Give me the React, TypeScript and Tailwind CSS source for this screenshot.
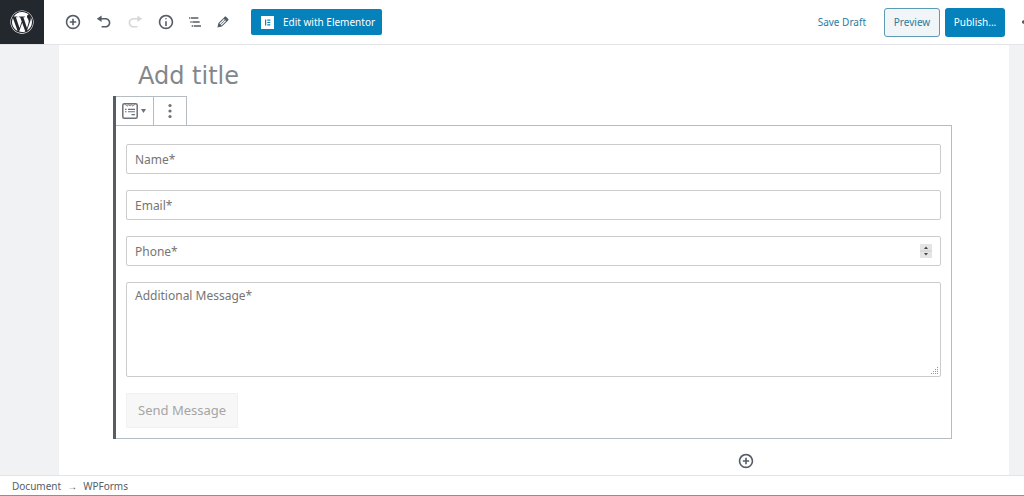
import React from 'react';
import { FaWordpress } from 'react-icons/fa';

interface IconProps {
  d: string;
  viewBox?: string;
  className?: string;
}

const paths = {
  insert:
    'M10 1c-5 0-9 4-9 9s4 9 9 9 9-4 9-9-4-9-9-9zm0 16c-3.9 0-7-3.1-7-7s3.1-7 7-7 7 3.1 7 7-3.1 7-7 7zm1-11H9v3H6v2h3v3h2v-3h3V9h-3V6z',
  undo: 'M12 5H7V2L1 6l6 4V7h5c2.2 0 4 1.8 4 4s-1.8 4-4 4H7v2h5c3.3 0 6-2.7 6-6s-2.7-6-6-6z',
  redo: 'M8 5h5V2l6 4-6 4V7H8c-2.2 0-4 1.8-4 4s1.8 4 4 4h5v2H8c-3.3 0-6-2.7-6-6s2.7-6 6-6z',
  info: 'M9 15h2V9H9v6zm1-10c-.5 0-1 .5-1 1s.5 1 1 1 1-.5 1-1-.5-1-1-1zm0-4c-5 0-9 4-9 9s4 9 9 9 9-4 9-9-4-9-9-9zm0 16c-3.9 0-7-3.1-7-7s3.1-7 7-7 7 3.1 7 7-3.1 7-7 7z',
  outline:
    'M5 5H3v2h2V5zm3 8h11v-2H8v2zm9-8H6v2h11V5zM7 11H5v2h2v-2zm0 8h2v-2H7v2zm3-2v2h11v-2H10z',
  edit: 'M13.89 3.39l2.71 2.72c.46.46.42 1.24.03 1.64l-8.01 8.02-5.56 1.16 1.16-5.58s7.6-7.63 7.99-8.03c.39-.39 1.22-.39 1.68.07zm-2.73 2.79l-5.59 5.61 1.11 1.11 5.54-5.65zm-2.97 8.23l5.58-5.6-1.07-1.08-5.59 5.6z',
};

const Icon: React.FC<IconProps> = ({
  d,
  viewBox = '0 0 20 20',
  className = 'w-4 h-4',
}: IconProps) => (
  <svg viewBox={viewBox} className={className} fill="currentColor" aria-hidden="true">
    <path d={d} />
  </svg>
);

const tools = [
  { label: 'Add block', d: paths.insert, className: 'w-[31px] text-[#555d66]' },
  { label: 'Undo', d: paths.undo, className: 'w-[31px] text-[#555d66]' },
  { label: 'Redo', d: paths.redo, className: 'w-[31px] text-[#d5d7d9]', disabled: true },
  { label: 'Content structure', d: paths.info, className: 'w-[31px] text-[#555d66]' },
  {
    label: 'Block navigation',
    d: paths.outline,
    viewBox: '0 0 24 24',
    className: 'w-7 text-[#555d66]',
  },
  { label: 'Modes', d: paths.edit, className: 'w-7 text-[#555d66]' },
];

const Header = () => (
  <header className="flex items-stretch h-[45px] bg-white border-b border-[#e2e4e7] overflow-hidden">
    <a
      href="#dashboard"
      aria-label="View Posts"
      className="w-11 shrink-0 flex items-center justify-center bg-[#23282e] text-white"
    >
      <FaWordpress className="w-6 h-6" />
    </a>
    <div className="flex items-center pl-[13px]">
      {tools.map((tool) => (
        <button
          key={tool.label}
          type="button"
          aria-label={tool.label}
          disabled={tool.disabled}
          className={`h-8 flex items-center justify-center ${tool.className}`}
        >
          <Icon d={tool.d} viewBox={tool.viewBox} />
        </button>
      ))}
      <button
        type="button"
        className="ml-[14px] h-[26px] w-[131px] pl-[10px] flex items-center gap-[9px] rounded-[2px] bg-[#0581bc] text-white text-[10px] whitespace-nowrap"
      >
        <svg viewBox="0 0 13 13" className="w-[13px] h-[13px]" aria-hidden="true">
          <rect width="13" height="13" fill="#fff" />
          <path d="M4 3.5h1.2v6H4zM6.3 3.5H9.3v1.2H6.3zM6.3 5.9H9.3v1.2H6.3zM6.3 8.3H9.3v1.2H6.3z" fill="#0581bc" />
        </svg>
        Edit with Elementor
      </button>
    </div>
    <div className="ml-auto flex items-center text-[10px] whitespace-nowrap">
      <button type="button" className="mr-[18px] text-[#2b7ba0]">
        Save Draft
      </button>
      <button
        type="button"
        className="h-[29px] w-14 mr-[5px] rounded-[3px] border border-[#5d9bb5] bg-[#f1f5f7] text-[#2b7ba0]"
      >
        Preview
      </button>
      <button type="button" className="h-[29px] w-[60px] rounded-[3px] bg-[#0581bc] text-white">
        Publish...
      </button>
      <button type="button" aria-label="Settings" className="w-[19px] flex justify-end text-[#555d66]">
        <svg viewBox="0 0 2 4" className="w-[2px] h-1" fill="currentColor" aria-hidden="true">
          <path d="M2 0v4L0 3V1z" />
        </svg>
      </button>
    </div>
  </header>
);

const BlockToolbar = () => (
  <div className="flex self-start h-[30px] -mb-px border border-[#b5bcc2] border-l-0 bg-white text-[#6c7279]">
    <button
      type="button"
      aria-label="Change block type"
      className="w-[38px] pr-[2px] flex items-center justify-center gap-[3px] border-r border-[#b5bcc2]"
    >
      <svg viewBox="0 0 16 16" className="w-4 h-4" fill="none" stroke="currentColor" aria-hidden="true">
        <rect x=".8" y=".8" width="14.4" height="14.4" rx="1.5" strokeWidth="1.5" />
        <path d="M3 1.2l2 2 1.7-1.4L8 2.8l1.3-1L11 3.2l2-2" strokeWidth=".9" />
        <path d="M3 6.4h1.5M6 6.4h7M3 8.8h1.5M6 8.8h7M9.5 11.6H13" strokeWidth="1.1" />
      </svg>
      <svg viewBox="0 0 5 4" className="w-[5px] h-1" fill="currentColor" aria-hidden="true">
        <path d="M0 0h5L2.5 4z" />
      </svg>
    </button>
    <button type="button" aria-label="More options" className="w-8 flex items-center justify-center">
      <svg viewBox="0 0 4 16" className="w-1 h-4" fill="currentColor" aria-hidden="true">
        <circle cx="2" cy="2.5" r="1.6" />
        <circle cx="2" cy="8" r="1.6" />
        <circle cx="2" cy="13.5" r="1.6" />
      </svg>
    </button>
  </div>
);

const fieldClass =
  'block w-full border border-[#ccc] rounded-[2px] bg-white px-2 text-[12px] text-[#444] placeholder:text-[#757575] placeholder:opacity-100';

const ContactForm = () => (
  <form
    className="flex flex-col gap-4 border border-l-0 border-[#b5bcc2] pt-[18px] pr-[10px] pb-[10px] pl-[10px]"
    onSubmit={(e) => e.preventDefault()}
  >
    <input type="text" aria-label="Name" placeholder="Name*" className={`${fieldClass} h-[30px]`} />
    <input type="email" aria-label="Email" placeholder="Email*" className={`${fieldClass} h-[30px]`} />
    <div className="relative">
      <input
        type="number"
        aria-label="Phone"
        placeholder="Phone*"
        className={`${fieldClass} h-[30px] [appearance:textfield]`}
      />
      <svg
        viewBox="0 0 12 14"
        className="absolute right-[9px] top-2 w-3 h-[14px] pointer-events-none"
        aria-hidden="true"
      >
        <rect width="12" height="14" fill="#e4e4e4" />
        <path d="M0 7h12" stroke="#cfcfcf" />
        <path d="M6 2.5L8 5H4zM6 11.5L4 9h4z" fill="#444" />
      </svg>
    </div>
    <div className="relative">
      <textarea
        aria-label="Additional Message"
        placeholder="Additional Message*"
        className={`${fieldClass} h-[95px] py-1 leading-[18px] resize-none`}
      />
      <svg
        viewBox="0 0 8 8"
        className="absolute right-[2px] bottom-[2px] w-2 h-2 pointer-events-none"
        fill="#999"
        aria-hidden="true"
      >
        <path d="M6 0h1v1H6zM6 2h1v1H6zM4 2h1v1H4zM6 4h1v1H6zM4 4h1v1H4zM2 4h1v1H2zM6 6h1v1H6zM4 6h1v1H4zM2 6h1v1H2zM0 6h1v1H0z" />
      </svg>
    </div>
    <button
      type="submit"
      disabled
      className="self-start h-[35px] px-[11px] border border-[#f1f1f1] bg-[#f7f7f7] text-[#a5a5a5] text-[13px]"
    >
      Send Message
    </button>
  </form>
);

const App: React.FC = () => (
  <div className="min-h-screen flex flex-col bg-white font-['Noto_Sans',sans-serif]">
    <Header />
    <main className="grow flex bg-[#f0f2f4] pl-[59px] pr-[15px]">
      <div className="grow min-w-0 bg-white pl-[54px] pr-[57px]">
        <input
          type="text"
          aria-label="Add title"
          placeholder="Add title"
          className="block w-full h-[51px] pt-[10px] pl-[25px] font-['DejaVu_Sans',sans-serif] text-[24px] leading-8 text-[#444] placeholder:text-[#82878c] placeholder:opacity-100"
        />
        <section className="flex flex-col border-l-3 border-[#555d66]">
          <BlockToolbar />
          <ContactForm />
        </section>
        <div className="flex justify-end pt-[14px] pr-[198px]">
          <button type="button" aria-label="Add block below" className="text-[#555d66]">
            <Icon d={paths.insert} />
          </button>
        </div>
      </div>
    </main>
    <footer className="h-[21px] pt-[2px] flex items-center gap-[6px] px-3 border-t border-b border-t-[#e2e4e7] border-b-[#8f8f8f] bg-white text-[10px] text-[#555d66]">
      <span>Document</span>
      <span aria-hidden="true">→</span>
      <span>WPForms</span>
    </footer>
  </div>
);

export default App;
